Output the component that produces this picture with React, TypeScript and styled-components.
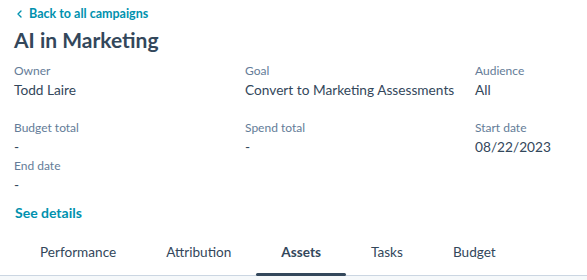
import React from "react";
import styled, { createGlobalStyle } from "styled-components";

const Global = createGlobalStyle`
  html, body { margin: 0; padding: 0; background: #ffffff; }
  body { font-family: Lato, "Noto Sans", sans-serif; color: #33475b; }
  * { box-sizing: border-box; }
`;

const Page = styled.div`
  width: 587px;
  height: 280px;
  display: flex;
  flex-direction: column;
  background: #ffffff;
  overflow: hidden;
`;

const Header = styled.div`
  padding: 6px 15px 0 14px;
  display: flex;
  flex-direction: column;
`;

const BackLink = styled.a`
  display: flex;
  align-items: center;
  gap: 7px;
  height: 16px;
  padding-left: 3px;
  font-size: 12.5px;
  font-weight: 700;
  line-height: 16px;
  color: #0091ae;
  text-decoration: none;
  cursor: pointer;
`;

const Title = styled.h1`
  margin: 4px 0 0 0;
  font-size: 21px;
  line-height: 28px;
  font-weight: 700;
  color: #33475b;
`;

const Fields = styled.div`
  margin-top: 8px;
  display: grid;
  grid-template-columns: 231px 230px 1fr;
  grid-template-rows: 57px 38px 38px;
`;

const Field = styled.div`
  display: flex;
  flex-direction: column;
`;

const Label = styled.div`
  font-size: 12px;
  line-height: 18px;
  color: #647c98;
`;

const Value = styled.div`
  font-size: 13.7px;
  line-height: 20px;
  color: #33475b;
`;

const SeeDetails = styled.a`
  margin: 8px 0 0 1px;
  font-size: 14px;
  line-height: 20px;
  font-weight: 700;
  color: #0091ae;
  cursor: pointer;
`;

const Tabs = styled.div`
  margin-top: 16px;
  padding-left: 15px;
  display: flex;
  border-bottom: 1px solid #cbd6e2;
  background: #ffffff;
`;

const Tab = styled.div<{ $active?: boolean }>`
  position: relative;
  padding: 0 25px;
  height: 36px;
  line-height: 26px;
  font-size: 13.6px;
  font-weight: ${(p) => (p.$active ? 700 : 400)};
  color: #33475b;
  white-space: nowrap;
  &::after {
    content: "";
    display: ${(p) => (p.$active ? "block" : "none")};
    position: absolute;
    left: 0;
    right: 0;
    bottom: -1px;
    height: 3px;
    border-radius: 2px;
    background: #33475b;
  }
`;

const Fill = styled.div`
  flex: 1;
  background: #f5f8fa;
`;

const Chevron = () => (
  <svg width="5" height="8" viewBox="0 0 5 8" fill="none">
    <path d="M4 1 L1 4 L4 7" stroke="#0091ae" strokeWidth="1.4" strokeLinecap="round" strokeLinejoin="round" />
  </svg>
);

const fields: [string, string][] = [
  ["Owner", "Todd Laire"],
  ["Goal", "Convert to Marketing Assessments"],
  ["Audience", "All"],
  ["Budget total", "-"],
  ["Spend total", "-"],
  ["Start date", "08/22/2023"],
  ["End date", "-"],
];

const tabs = ["Performance", "Attribution", "Assets", "Tasks", "Budget"];

export default function App() {
  return (
    <>
      <Global />
      <Page>
        <Header>
          <BackLink>
            <Chevron />
            Back to all campaigns
          </BackLink>
          <Title>AI in Marketing</Title>
          <Fields>
            {fields.map(([l, v]) => (
              <Field key={l}>
                <Label>{l}</Label>
                <Value>{v}</Value>
              </Field>
            ))}
          </Fields>
          <SeeDetails>See details</SeeDetails>
        </Header>
        <Tabs>
          {tabs.map((t) => (
            <Tab key={t} $active={t === "Assets"}>
              {t}
            </Tab>
          ))}
        </Tabs>
        <Fill />
      </Page>
    </>
  );
}
